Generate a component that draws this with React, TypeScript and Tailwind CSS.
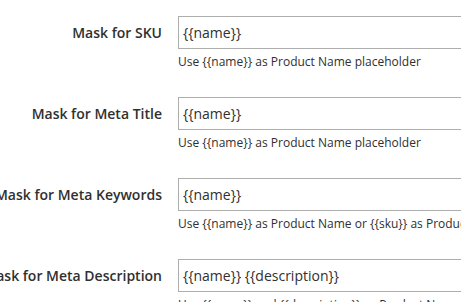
import React from "react";

const rows = [
  { label: "Mask for SKU", value: "{{name}}", note: "Use {{name}} as Product Name placeholder" },
  { label: "Mask for Meta Title", value: "{{name}}", note: "Use {{name}} as Product Name placeholder" },
  {
    label: "Mask for Meta Keywords",
    value: "{{name}}",
    note: "Use {{name}} as Product Name or {{sku}} as Product SKU placeholders",
  },
  {
    label: "Mask for Meta Description",
    value: "{{name}} {{description}}",
    note: "Use {{name}} and {{description}} as Product Name and Product Description placeholders",
  },
];

export default function App() {
  return (
    <div className="w-[461px] h-[302px] overflow-hidden bg-white pt-[16px] font-['Open_Sans',sans-serif] text-[#303030]">
      {rows.map((r) => (
        <div key={r.label} className="flex items-start mb-[27px]">
          <div className="w-[162px] shrink-0 h-[33px] flex items-center justify-end">
            <span className="whitespace-nowrap text-[14px] font-semibold">{r.label}</span>
          </div>
          <div className="ml-[16px] w-[320px] shrink-0">
            <input
              readOnly
              defaultValue={r.value}
              className="block w-full h-[33px] border border-[#adadad] bg-white px-[4px] text-[14px] text-[#303030] outline-none"
            />
            <div className="mt-[5px] text-[12px] leading-[16px] whitespace-nowrap">{r.note}</div>
          </div>
        </div>
      ))}
    </div>
  );
}
